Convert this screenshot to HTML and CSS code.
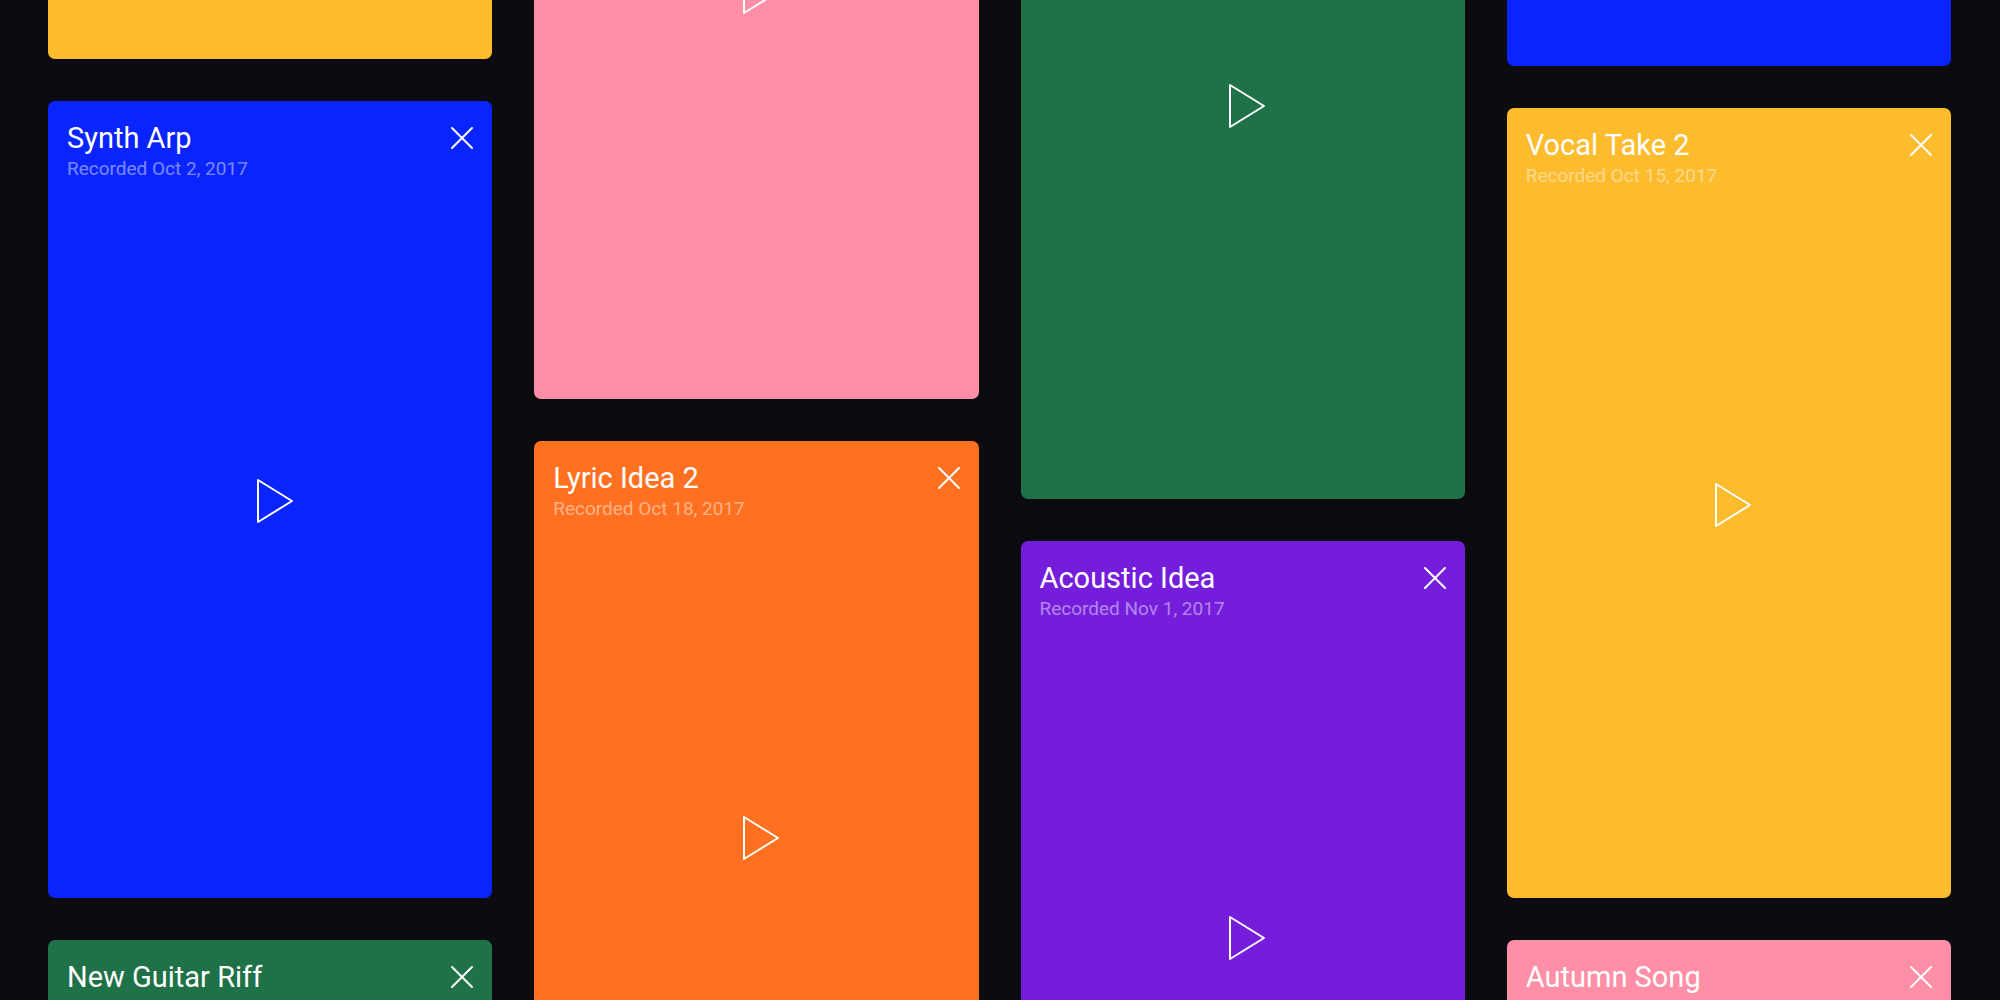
FILE: index.html
```
<!DOCTYPE html>
<html lang="en">
<head>
<meta charset="utf-8">
<meta name="viewport" content="width=device-width, initial-scale=1">
<title>Recordings</title>
<link rel="stylesheet" href="styles.css">
</head>
<body>
<svg class="sprite" aria-hidden="true">
  <symbol id="close" viewBox="0 0 24 24"><path d="M2 2 22 22M22 2 2 22" fill="none" stroke="currentColor" stroke-width="2" stroke-linecap="round"/></symbol>
  <symbol id="play" viewBox="0 0 38 46"><path d="M2 2V44L36 23Z" fill="none" stroke="currentColor" stroke-width="2" stroke-linejoin="round"/></symbol>
</svg>
<main class="wall">
  <section class="column column-one">
    <article class="card yellow"></article>
    <article class="card blue tall">
      <header class="card-head">
        <div><h2 class="title">Synth Arp</h2><p class="date">Recorded Oct 2, 2017</p></div>
        <button class="close" aria-label="Remove"><svg><use href="#close"/></svg></button>
      </header>
      <button class="play" aria-label="Play"><svg><use href="#play"/></svg></button>
    </article>
    <article class="card green">
      <header class="card-head">
        <div><h2 class="title">New Guitar Riff</h2></div>
        <button class="close" aria-label="Remove"><svg><use href="#close"/></svg></button>
      </header>
    </article>
  </section>
  <section class="column column-two">
    <article class="card pink taller">
      <button class="play" aria-label="Play"><svg><use href="#play"/></svg></button>
    </article>
    <article class="card orange">
      <header class="card-head">
        <div><h2 class="title">Lyric Idea 2</h2><p class="date">Recorded Oct 18, 2017</p></div>
        <button class="close" aria-label="Remove"><svg><use href="#close"/></svg></button>
      </header>
      <button class="play" aria-label="Play"><svg><use href="#play"/></svg></button>
    </article>
  </section>
  <section class="column column-three">
    <article class="card green">
      <button class="play" aria-label="Play"><svg><use href="#play"/></svg></button>
    </article>
    <article class="card purple">
      <header class="card-head">
        <div><h2 class="title">Acoustic Idea</h2><p class="date">Recorded Nov 1, 2017</p></div>
        <button class="close" aria-label="Remove"><svg><use href="#close"/></svg></button>
      </header>
      <button class="play" aria-label="Play"><svg><use href="#play"/></svg></button>
    </article>
  </section>
  <section class="column column-four">
    <article class="card blue"></article>
    <article class="card yellow">
      <header class="card-head">
        <div><h2 class="title">Vocal Take 2</h2><p class="date">Recorded Oct 15, 2017</p></div>
        <button class="close" aria-label="Remove"><svg><use href="#close"/></svg></button>
      </header>
      <button class="play" aria-label="Play"><svg><use href="#play"/></svg></button>
    </article>
    <article class="card pink">
      <header class="card-head">
        <div><h2 class="title">Autumn Song</h2></div>
        <button class="close" aria-label="Remove"><svg><use href="#close"/></svg></button>
      </header>
    </article>
  </section>
</main>
</body>
</html>
```
FILE: styles.css
```
* { box-sizing: border-box; }

body {
  margin: 0;
  background: #0c0b10;
  color: #fff;
  font-family: Roboto, "Liberation Sans", sans-serif;
}

.sprite { display: none; }

.wall {
  display: grid;
  grid-template-columns: repeat(4, minmax(0, 1fr));
  align-items: start;
  gap: 42px;
  height: 100vh;
  padding: 0 49px 0 48px;
  overflow: hidden;
}

.column {
  display: flex;
  flex-direction: column;
  gap: 42px;
}

/* each column is scrolled by its own amount */
.column-one { margin-top: -731px; }
.column-two { margin-top: -419px; }
.column-three { margin-top: -291px; }
.column-four { margin-top: -724px; }

.card {
  display: grid;
  min-height: 790px;
  border-radius: 7px;
}

.tall { min-height: 797px; }
.taller { min-height: 818px; }

.blue { background: #0a24ff; }
.yellow { background: #fdbb2e; }
.green { background: #1f7148; }
.pink { background: #ff8fa7; }
.orange { background: #ff7120; }
.purple { background: #741edc; }

.card-head {
  grid-area: 1 / 1;
  align-self: start;
  display: flex;
  justify-content: space-between;
  align-items: flex-start;
  padding: 18px 18px 0 19px;
}

.title {
  margin: 0;
  font-size: 29px;
  font-weight: 400;
  line-height: 38px;
}

.date {
  margin: 0;
  font-size: 19px;
  line-height: 24px;
  opacity: 0.45;
}

button {
  padding: 0;
  border: 0;
  background: none;
  color: inherit;
  cursor: pointer;
}

button svg { display: block; }

.close { padding-top: 7px; }
.close svg { width: 24px; height: 24px; }

.play {
  grid-area: 1 / 1;
  place-self: center;
  padding: 3px 0 0 9px;
}

.play svg { width: 38px; height: 46px; }
```
